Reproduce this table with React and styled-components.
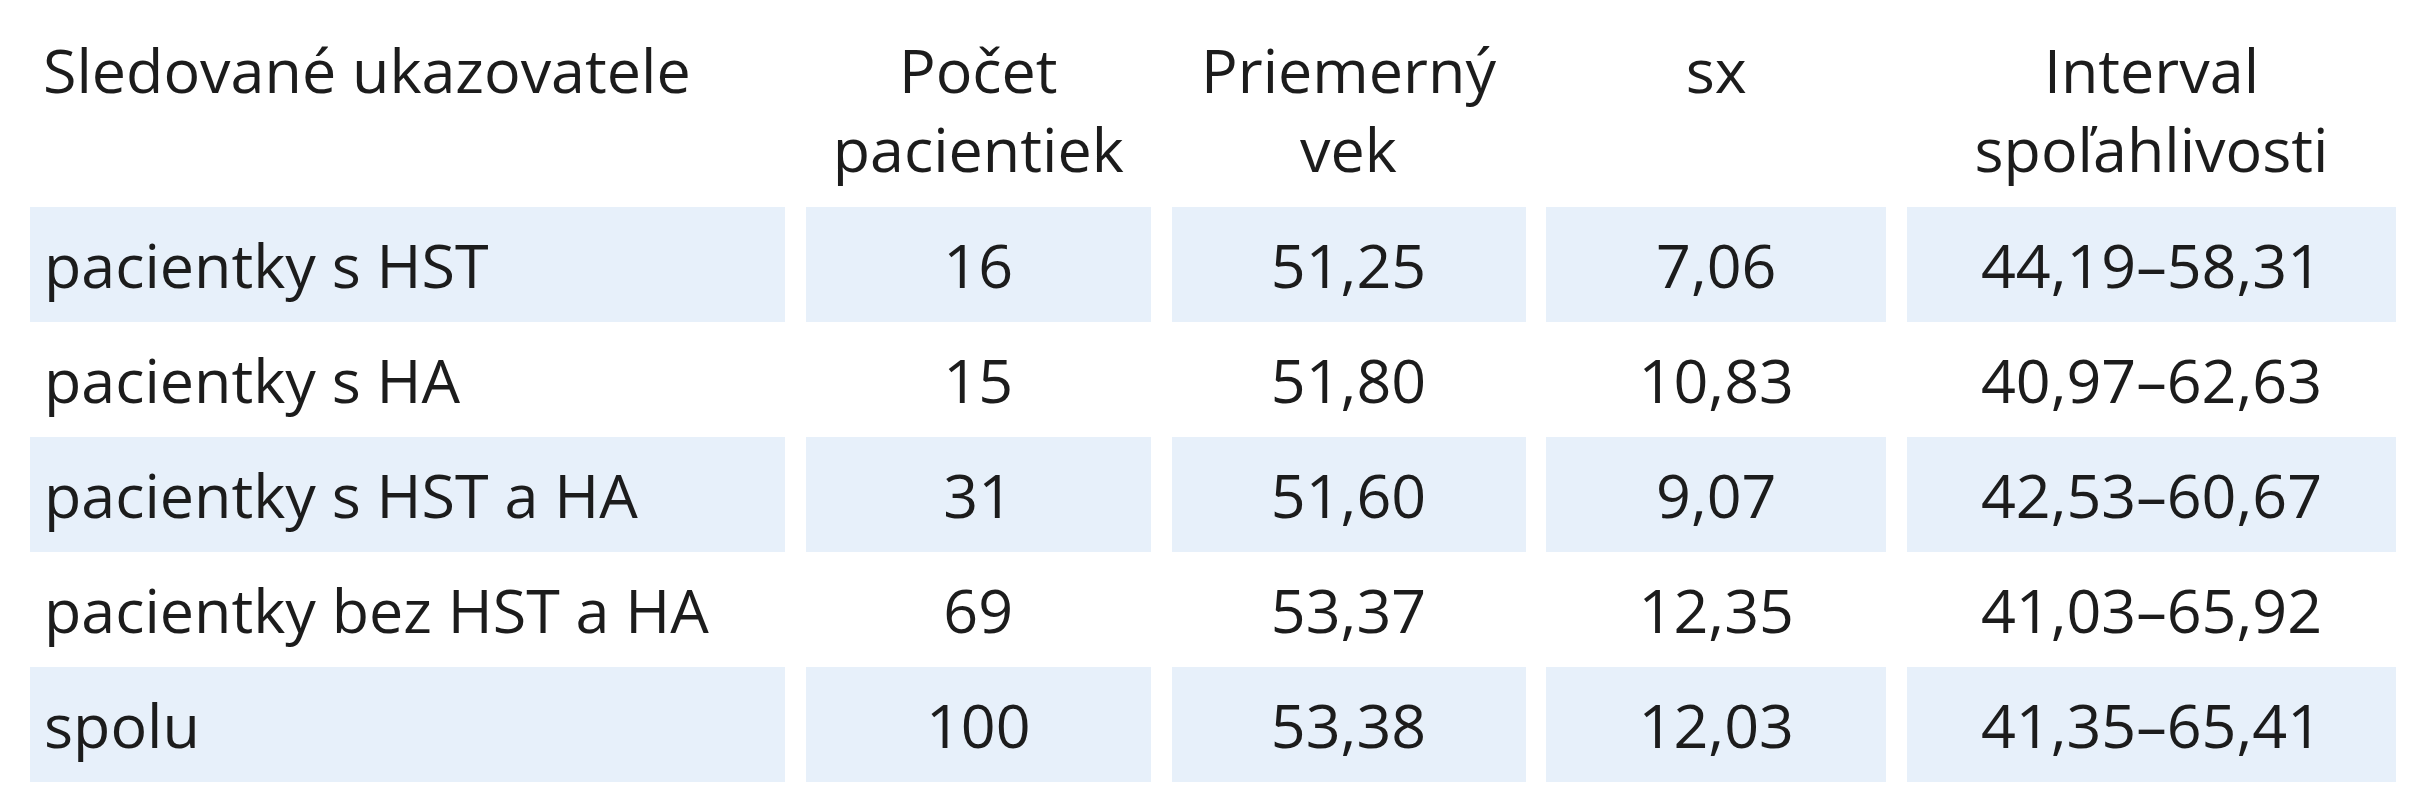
import styled, { createGlobalStyle } from "styled-components";

const GlobalStyle = createGlobalStyle`
  html, body {
    margin: 0;
    background: #ffffff;
  }
  body {
    font-family: "Open Sans", "Liberation Sans", sans-serif;
    color: #1c1c1c;
  }
`;

const Page = styled.div`
  width: 2425px;
  height: 800px;
  padding: 30px 29px 0 30px;
  box-sizing: border-box;
  overflow: hidden;
`;

const Table = styled.div`
  display: flex;
  flex-direction: column;
`;

const Row = styled.div`
  display: grid;
  grid-template-columns: 755px 345px 354px 340px 489px;
  column-gap: 20.75px;
  height: ${({ $header }) => ($header ? "177px" : "115px")};
`;

const HeadCell = styled.div`
  font-size: 61px;
  line-height: 79px;
  text-align: ${({ $left }) => ($left ? "left" : "center")};
  padding-left: ${({ $left }) => ($left ? "13px" : "0")};
  white-space: pre-line;
`;

const Cell = styled.div`
  display: flex;
  align-items: center;
  justify-content: ${({ $left }) => ($left ? "flex-start" : "center")};
  padding-left: ${({ $left }) => ($left ? "14px" : "0")};
  background: ${({ $shaded }) => ($shaded ? "#e7f0fa" : "transparent")};
  font-size: 61px;
  line-height: 1;
`;

const headers = [
  "Sledované ukazovatele",
  "Počet\npacientiek",
  "Priemerný\nvek",
  "sx",
  "Interval\nspoľahlivosti",
];

const rows = [
  ["pacientky s HST", "16", "51,25", "7,06", "44,19–58,31"],
  ["pacientky s HA", "15", "51,80", "10,83", "40,97–62,63"],
  ["pacientky s HST a HA", "31", "51,60", "9,07", "42,53–60,67"],
  ["pacientky bez HST a HA", "69", "53,37", "12,35", "41,03–65,92"],
  ["spolu", "100", "53,38", "12,03", "41,35–65,41"],
];

export default function App() {
  return (
    <>
      <GlobalStyle />
      <Page>
        <Table>
          <Row $header>
            {headers.map((h, i) => (
              <HeadCell key={h} $left={i === 0}>
                {h}
              </HeadCell>
            ))}
          </Row>
          {rows.map((r, ri) => (
            <Row key={r[0]}>
              {r.map((v, ci) => (
                <Cell key={ci} $left={ci === 0} $shaded={ri % 2 === 0}>
                  {v}
                </Cell>
              ))}
            </Row>
          ))}
        </Table>
      </Page>
    </>
  );
}
